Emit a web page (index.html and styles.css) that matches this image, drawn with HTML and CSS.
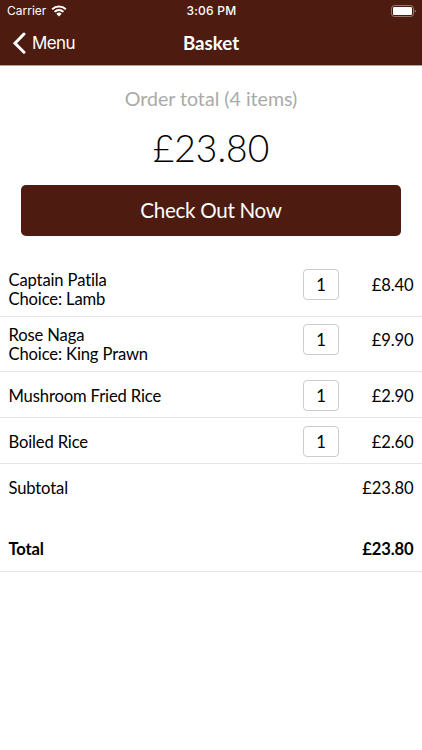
FILE: index.html
```html
<!DOCTYPE html>
<html lang="en">
<head>
<meta charset="utf-8">
<title>Basket</title>
<link rel="stylesheet" href="styles.css">
</head>
<body>
<header class="top">
  <div class="status">
    <div class="carrier"><span>Carrier</span>
      <svg class="wifi" viewBox="0 0 16 12"><path d="M1.2 4.3a9.8 9.8 0 0 1 13.6 0M3.6 6.9a6.3 6.3 0 0 1 8.8 0" fill="none" stroke="#fff" stroke-width="2"/><path d="M5.3 8.8a3.9 3.9 0 0 1 5.4 0L8 11.6z" fill="#fff"/></svg>
    </div>
    <div class="time">3:06 PM</div>
    <svg class="battery" viewBox="0 0 25 12"><rect x=".5" y=".5" width="22" height="11" rx="3" fill="none" stroke="#fff" stroke-opacity=".4"/><rect x="2" y="2" width="19" height="8" rx="1.3" fill="#fff"/><path d="M23.8 4.4v3.2c1.2-.5 1.2-2.7 0-3.2z" fill="#fff" fill-opacity=".6"/></svg>
  </div>
  <nav class="nav">
    <div class="back"><svg class="chevron" viewBox="0 0 14 22"><path d="M12 2L3 11.2l9 9" fill="none" stroke="#fff" stroke-width="3" stroke-linecap="round"/></svg><span>Menu</span></div>
    <h1 class="title">Basket</h1>
  </nav>
</header>
<main>
  <section class="summary">
    <div class="caption">Order total (4 items)</div>
    <div class="amount">£23.80</div>
    <button class="checkout">Check Out Now</button>
  </section>
  <section class="items">
    <div class="row tall"><div class="name">Captain Patila<br>Choice: Lamb</div><div class="qty">1</div><div class="price">£8.40</div></div>
    <div class="row tall"><div class="name">Rose Naga<br>Choice: King Prawn</div><div class="qty">1</div><div class="price">£9.90</div></div>
    <div class="row"><div class="name">Mushroom Fried Rice</div><div class="qty">1</div><div class="price">£2.90</div></div>
    <div class="row"><div class="name">Boiled Rice</div><div class="qty">1</div><div class="price">£2.60</div></div>
    <div class="totals">
      <div class="line"><span>Subtotal</span><span>£23.80</span></div>
      <div class="line grand"><span>Total</span><span>£23.80</span></div>
    </div>
  </section>
</main>
</body>
</html>
```
FILE: styles.css
```css
* { box-sizing: border-box; }
body { margin: 0; background: #fff; color: #000; font-family: Lato, sans-serif; font-size: 16.6px; letter-spacing: -.14px; font-variant-ligatures: none; }
.top { height: 66px; background: #4d1b0f; color: #fff; border-bottom: 1px solid #b8a29d; }
.status { height: 22px; display: grid; grid-template-columns: 1fr auto 1fr; align-items: center; padding: 0 6px 0 7px; font: 12px/22px Inter, sans-serif; letter-spacing: 0; }
.carrier { display: flex; align-items: center; gap: 5px; }
.wifi { width: 16px; height: 12px; margin-top: -1px; }
.time { font-weight: 500; letter-spacing: .25px; }
.battery { width: 25px; height: 12px; margin-top: -1px; justify-self: end; }
.nav { height: 41px; display: grid; grid-template-columns: 1fr auto 1fr; align-items: center; padding: 0 12px; }
.back { display: flex; align-items: center; gap: 6px; font: 17px/22px Inter, sans-serif; letter-spacing: -.6px; }
.chevron { width: 14px; height: 22px; }
.title { margin: 0; font-size: 18.7px; line-height: 24px; font-weight: 700; letter-spacing: 0; }
.summary { height: 196px; padding: 20px 21px 0; text-align: center; }
.caption { color: #aaa; font-size: 19.6px; line-height: 26px; letter-spacing: 0; }
.amount { margin-top: 12px; font-size: 37.2px; line-height: 48px; font-weight: 300; letter-spacing: 0; }
.checkout { display: block; width: 100%; height: 51px; margin-top: 13px; padding: 0; border: 0; border-radius: 5px; background: #4d1b0f; color: #fff; font: 20.6px/51px Lato, sans-serif; letter-spacing: -.3px; }
.row { height: 46px; display: grid; grid-template-columns: 1fr 36px 74.5px; align-items: start; padding: 8px 8.5px 0; border-bottom: 1px solid #e6e6e6; }
.tall { height: 55px; padding-top: 7px; }
.name { line-height: 33px; }
.tall .name { line-height: 19px; padding-top: 2px; }
.qty { height: 31px; border: 1px solid #ccc; border-radius: 4px; text-align: center; line-height: 31px; }
.price { text-align: right; line-height: 33px; }
.totals { height: 108px; padding: 13px 8.5px 0; border-bottom: 1px solid #e6e6e6; }
.line { display: flex; justify-content: space-between; line-height: 22px; }
.grand { margin-top: 39px; font-weight: 700; }
```
